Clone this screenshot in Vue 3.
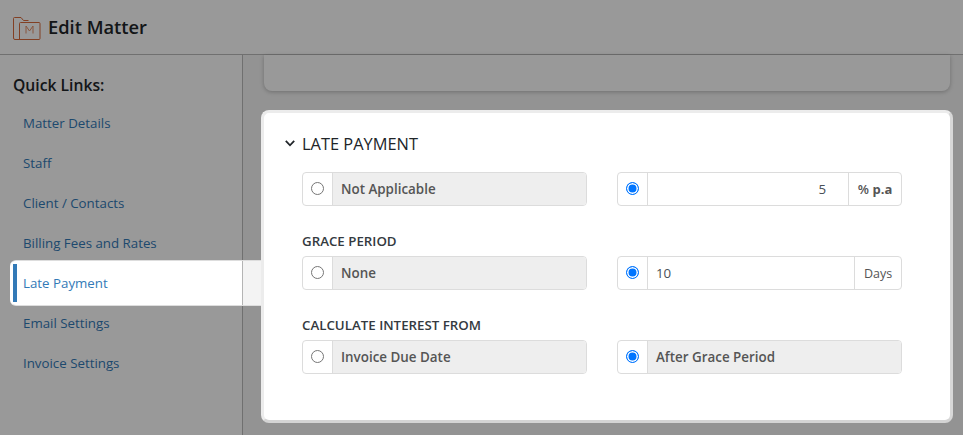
<script setup>
const links = ['Matter Details', 'Staff', 'Client / Contacts', 'Billing Fees and Rates', 'Late Payment', 'Email Settings', 'Invoice Settings']
</script>

<template>
  <div class="page">
    <header class="top">
      <svg class="logo" width="30" height="26" viewBox="0 0 30 26" fill="none" stroke="#d96c3c" stroke-width="1">
        <path d="M6.500 24.500H3a1.500 1.500 0 0 1-1.500-1.500V3.500A1 1 0 0 1 2.500 2.500h6.500l2.500 3h5" />
        <path d="M7.500 24.500V8.500a1 1 0 0 1 1-1h18.500a1 1 0 0 1 1 1V23.500a1 1 0 0 1-1 1H3" />
        <path d="M14 18.500V11l3.500 5 3.500-5v7.500" stroke="#e59068" />
      </svg>
      <h1>Edit Matter</h1>
    </header>
    <div class="body">
      <aside class="side">
        <h2>Quick Links:</h2>
        <nav>
          <a v-for="l in links" :key="l" class="link" :class="{ active: l === 'Late Payment' }">{{ l }}</a>
        </nav>
      </aside>
      <main class="main">
        <div class="prev"></div>
        <section class="card">
          <div class="head">
            <svg width="10" height="7" viewBox="0 0 10 7" fill="none" stroke="#212529" stroke-width="1.800"><path d="M.8.900l4.200 4.400L9.200.900" /></svg>
            <span>LATE PAYMENT</span>
          </div>
          <div class="grid">
            <div class="group"><span class="radio"><i class="off"></i></span><span class="fixed">Not Applicable</span></div>
            <div class="group"><span class="radio"><i class="on"></i></span><span class="input right">5</span><span class="addon"><span class="pct">%</span> <b>p.a</b></span></div>

            <div class="label">GRACE PERIOD</div>
            <div class="group"><span class="radio"><i class="off"></i></span><span class="fixed">None</span></div>
            <div class="group"><span class="radio"><i class="on"></i></span><span class="input">10</span><span class="addon days">Days</span></div>

            <div class="label">CALCULATE INTEREST FROM</div>
            <div class="group"><span class="radio"><i class="off"></i></span><span class="fixed">Invoice Due Date</span></div>
            <div class="group"><span class="radio"><i class="on"></i></span><span class="fixed">After Grace Period</span></div>
          </div>
        </section>
      </main>
    </div>
    <div class="overlay"></div>
  </div>
</template>

<style>
html, body { margin: 0; }
</style>

<style scoped>
.page {
  position: relative;
  width: 963px;
  height: 435px;
  overflow: hidden;
  background: #fff;
  font-family: "Open Sans", "Liberation Sans", sans-serif;
  color: #212529;
  display: flex;
  flex-direction: column;
}
.overlay {
  position: absolute;
  inset: 0;
  background: rgba(0, 0, 0, 0.4);
  z-index: 5;
}
.top {
  height: 54px;
  flex: none;
  display: flex;
  align-items: center;
  padding-left: 12px;
  gap: 6px;
  border-bottom: 1px solid #bbb;
}
.logo { flex: none; margin-top: 1px; }
h1 {
  margin: 0;
  font-size: 18.300px;
  font-weight: 600;
  line-height: 24px;
}
.body { flex: 1; display: flex; min-height: 0; }
.side {
  width: 242px;
  flex: none;
  border-right: 1px solid #bbb;
  position: relative;
}
h2 {
  margin: 19px 0 7px 13px;
  font-size: 15.700px;
  font-weight: 600;
  line-height: 22px;
}
nav { display: flex; flex-direction: column; }
.link {
  height: 40px;
  padding-left: 23px;
  display: flex;
  align-items: center;
  font-size: 13.300px;
  color: #337ab7;
  box-sizing: border-box;
}
.active {
  position: relative;
  z-index: 6;
  height: 46px;
  margin: -3px -19px -3px 10px;
  padding-left: 13px;
  background: linear-gradient(to right, #fff 232px, #b4b4b4 232px, #b4b4b4 233px, #f3f3f3 233px);
  border: solid #ddd;
  border-width: 1px 0;
  border-radius: 6px 0 0 6px;
}
.active::before {
  content: "";
  position: absolute;
  left: 3px;
  top: 3px;
  bottom: 3px;
  width: 4px;
  background: #337ab7;
}
.main {
  flex: 1;
  background: #f5f5f5;
  padding: 0 10px 0 18px;
  min-width: 0;
}
.prev {
  height: 36px;
  margin: 0 3px 19px;
  background: #fff;
  border-radius: 0 0 8px 8px;
  box-shadow: 0 1px 4px rgba(0, 0, 0, 0.25);
}
.card {
  position: relative;
  z-index: 6;
  height: 313px;
  box-sizing: border-box;
  background: #fff;
  border: 3px solid;
  border-color: #ececec #d8d8d8 #d4d4d4 #ececec;
  border-radius: 8px;
  padding: 18px 48px 0 21px;
}
.head {
  display: flex;
  align-items: center;
  gap: 7px;
  height: 24px;
  font-size: 16.400px;
  font-weight: 400;
  color: #212529;
}
.grid {
  display: grid;
  grid-template-columns: 285px 285px;
  column-gap: 30px;
  margin: 17px 0 0 17px;
}
.label {
  grid-column: 1 / -1;
  height: 50px;
  box-sizing: border-box;
  padding-top: 26px;
  font-size: 13.300px;
  font-weight: 600;
  line-height: 18px;
  color: #343a40;
}
.group {
  height: 34px;
  box-sizing: border-box;
  display: flex;
  border: 1px solid #dcdcdc;
  border-radius: 4px;
  font-size: 13.300px;
  color: #495057;
  overflow: hidden;
}
.radio {
  width: 30px;
  flex: none;
  box-sizing: border-box;
  border-right: 1px solid #dcdcdc;
  display: flex;
  align-items: center;
  justify-content: center;
  padding-bottom: 2px;
}
.radio i {
  width: 13px;
  height: 13px;
  border-radius: 50%;
  display: block;
  box-sizing: border-box;
}
.off { border: 1px solid #767676; background: #fff; }
.on {
  border: 1px solid #0075ff;
  background: #0075ff;
  box-shadow: inset 0 0 0 1.500px #fff;
}
.fixed {
  flex: 1;
  background: #eee;
  display: flex;
  align-items: center;
  padding-left: 8px;
  font-size: 13.400px;
  font-weight: 600;
  color: #555;
}
.input {
  flex: 1;
  display: flex;
  align-items: center;
  padding: 0 8px;
}
.right { justify-content: flex-end; padding-right: 22px; }
.addon {
  flex: none;
  box-sizing: border-box;
  width: 53px;
  border-left: 1px solid #dcdcdc;
  display: flex;
  align-items: center;
  justify-content: center;
  gap: 3.500px;
  font-size: 13px;
  color: #555;
}
.days { width: 47px; font-size: 12.500px; }
.pct { font-weight: 600; }
.addon b { font-weight: 700; }
</style>
